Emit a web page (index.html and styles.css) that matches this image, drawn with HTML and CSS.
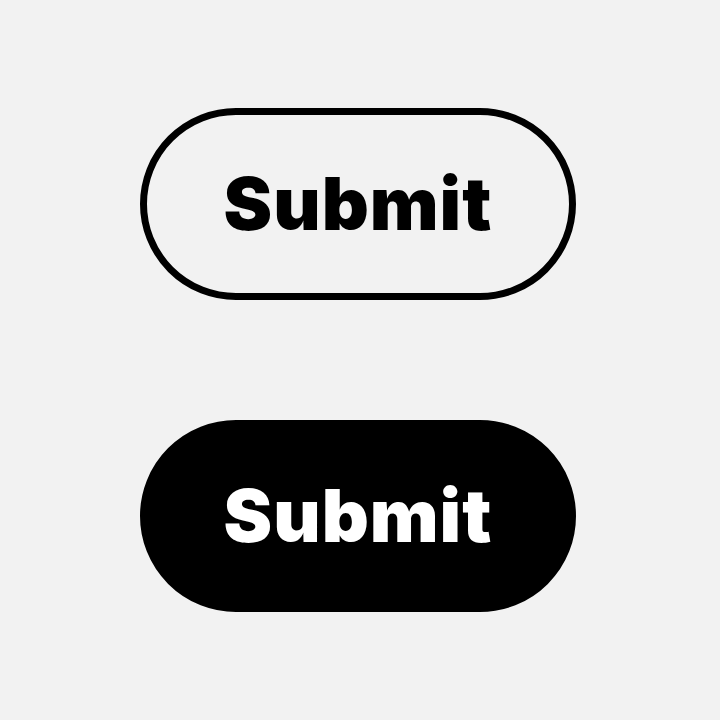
FILE: index.html
```html
<!DOCTYPE html>
<html lang="en">
<head>
    <meta charset="UTF-8">
    <title>Submit buttons</title>
    <link rel="stylesheet" href="styles.css">
</head>
<body>
    <div class="stack">
        <button class="btn btn-outline" type="button">Submit</button>
        <button class="btn btn-solid" type="button">Submit</button>
    </div>
</body>
</html>
```

FILE: styles.css
```css
/* page */
html, body {
    margin: 0;
    height: 100%;
}

body {
    background: #f2f2f2;
    font-family: Inter, "Liberation Sans", sans-serif;
}

/* two buttons stacked in the middle */
.stack {
    height: 100%;
    display: flex;
    flex-direction: column;
    align-items: center;
    justify-content: center;
    gap: 120px;
}

/* pill buttons */
.btn {
    box-sizing: border-box;
    width: 436px;
    height: 192px;
    border-radius: 96px;
    border: 7px solid #000;
    font-family: inherit;
    font-size: 73px;
    font-weight: 900;
    letter-spacing: 1px;
    display: flex;
    align-items: center;
    justify-content: center;
    padding: 0 0 2px;
    cursor: pointer;
    margin-left: -4px;
}

.btn-outline {
    background: transparent;
    color: #000;
}

.btn-solid {
    background: #000;
    color: #fff;
}
```
